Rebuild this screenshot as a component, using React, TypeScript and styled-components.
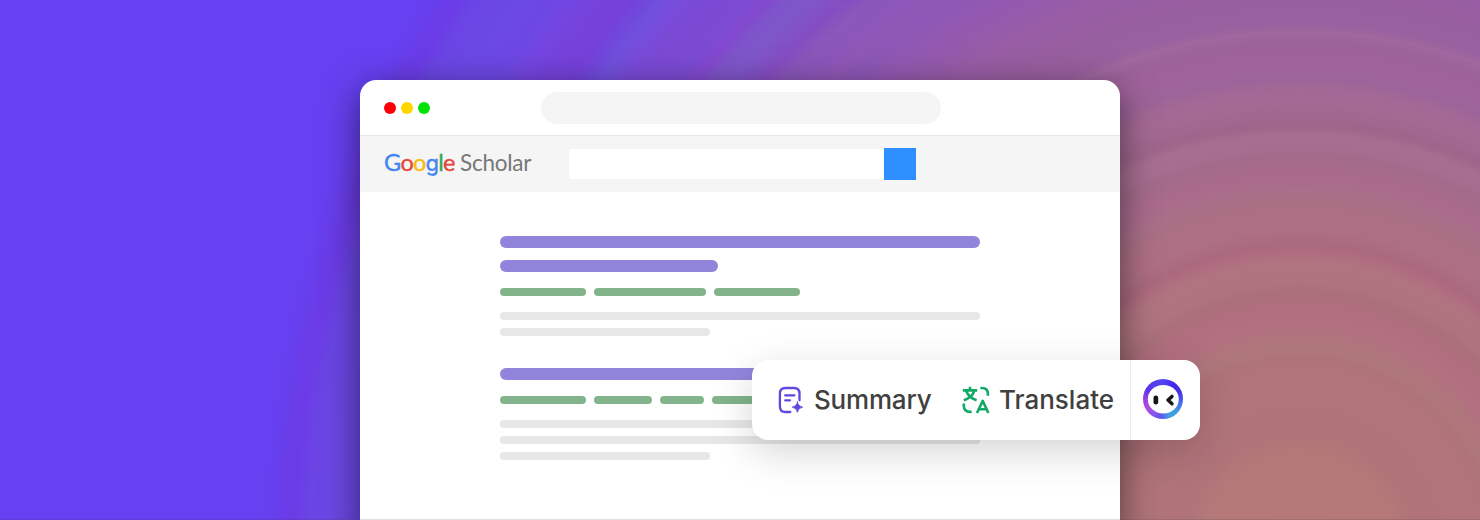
import React from "react";
import styled, { createGlobalStyle } from "styled-components";

const GlobalStyle = createGlobalStyle`
  * { box-sizing: border-box; }
  body { margin: 0; }
`;

const Hero = styled.main`
  position: relative;
  width: 1480px;
  height: 520px;
  overflow: hidden;
  display: flex;
  justify-content: center;
  padding-top: 80px;
  background: radial-gradient(
    circle at 1300px 550px,
    #b47977 0px, #b37877 98px, #af7379 120px, #b0737a 130px, #b0747a 150px,
    #b0747a 182px, #ae7379 193px, #ae777b 202px, #af767c 210px, #b27080 225px,
    #b06e7e 245px, #aa7079 257px, #ae747d 268px, #af757e 285px, #b06f80 295px,
    #aa697e 305px, #ad6f83 320px, #ad6f84 338px, #a87084 350px, #a97089 358px,
    #a96c8b 367px, #a86a8c 380px, #a26b8a 395px, #a76d8f 402px, #a76e90 415px,
    #9f668b 425px, #a06790 435px, #a56a93 447px, #a36895 460px, #9c649a 472px,
    #a0639b 490px, #9c629a 508px, #a0689e 518px, #99619f 526px, #985f9f 550px,
    #985da5 585px, #955aab 605px, #9359b2 628px, #8c57b6 650px, #9058b6 666px,
    #8c56bb 680px, #8a57ba 697px, #864dc2 713px, #8251c6 724px, #7f57c9 738px,
    #7e54ca 753px, #8349cf 765px, #7b4bd3 780px, #7a4ad5 814px, #794bda 825px,
    #7150dc 842px, #7148dc 854px, #7541da 866px, #7542dc 896px, #7446e1 910px,
    #6d47e4 928px, #6b48e4 965px, #6b45e5 990px, #6b3be7 1006px,
    #693de9 1018px, #6640f1 1036px
  );
  &::after {
    content: "";
    position: absolute;
    inset: auto 0 0;
    height: 1px;
    background: rgba(70, 70, 70, 0.16);
  }
`;

const BrowserWindow = styled.section`
  width: 760px;
  height: 460px;
  border-radius: 16px 16px 0 0;
  overflow: hidden;
  background: #fff;
  box-shadow: 0 10px 36px rgba(0, 0, 0, 0.52);
`;

const TitleBar = styled.header`
  display: flex;
  align-items: center;
  height: 56px;
  padding-left: 24px;
  border-bottom: 1px solid #e6e6e6;
`;

const Lights = styled.div`
  display: flex;
  gap: 5px;
  width: 157px;
`;

const Light = styled.span<{ $color: string }>`
  width: 12px;
  height: 12px;
  border-radius: 50%;
  background: ${(p) => p.$color};
`;

const AddressBar = styled.div`
  width: 400px;
  height: 32px;
  border-radius: 16px;
  background: #f5f5f5;
`;

const SearchHeader = styled.div`
  display: flex;
  align-items: center;
  height: 56px;
  padding-left: 24px;
  background: #f5f5f5;
`;

const Brand = styled.div`
  display: flex;
  align-items: baseline;
  width: 185px;
  padding-bottom: 3px;
  font: 400 22.5px/28px Lato, "Liberation Sans", sans-serif;
  white-space: nowrap;
  color: #777;
`;

const Wordmark = styled.span`
  width: 76px;
  font-size: 23.5px;
  letter-spacing: -0.65px;
  -webkit-text-stroke: 0.4px currentColor;
`;

const Letter = styled.span<{ $color: string }>`
  color: ${(p) => p.$color};
`;

const RoundLetter = styled(Letter)`
  font-family: Inter, "Liberation Sans", sans-serif;
  font-size: 21.5px;
  line-height: 1;
  letter-spacing: -0.8px;
`;

const Product = styled.span`
  letter-spacing: -0.25px;
`;

const SearchField = styled.div`
  width: 315px;
  height: 30px;
  background: #fff;
`;

const SearchButton = styled.div`
  width: 32px;
  height: 32px;
  background: #2e90ff;
`;

const Results = styled.div`
  display: flex;
  flex-direction: column;
  gap: 32px;
  width: 480px;
  margin: 44px 0 0 140px;
`;

const Result = styled.article`
  display: flex;
  flex-direction: column;
`;

const TitleLine = styled.div<{ $width: number }>`
  width: ${(p) => p.$width}px;
  height: 12px;
  margin-bottom: 12px;
  border-radius: 6px;
  background: #9085da;
`;

const MetaRow = styled.div`
  display: flex;
  gap: 8px;
  margin: 4px 0 16px;
`;

const MetaChip = styled.span<{ $width: number }>`
  width: ${(p) => p.$width}px;
  height: 8px;
  border-radius: 4px;
  background: #82b38a;
`;

const Snippet = styled.div`
  display: flex;
  flex-direction: column;
  gap: 8px;
`;

const SnippetLine = styled.div<{ $width: number }>`
  width: ${(p) => p.$width}px;
  height: 8px;
  border-radius: 4px;
  background: #e7e7e7;
`;

const Toolbar = styled.aside`
  position: absolute;
  left: 752px;
  top: 360px;
  width: 448px;
  height: 80px;
  display: flex;
  align-items: center;
  padding-left: 24px;
  border-radius: 16px;
  background: #fff;
  box-shadow: 0 12px 40px rgba(0, 0, 0, 0.17);
`;

const Action = styled.div<{ $width: number; $gap: number }>`
  display: flex;
  align-items: center;
  width: ${(p) => p.$width}px;
  gap: ${(p) => p.$gap}px;
  font: 500 26px/32px Inter, "Liberation Sans", sans-serif;
  color: #404040;
  white-space: nowrap;
`;

const ActionLabel = styled.span<{ $tracking: number }>`
  letter-spacing: ${(p) => p.$tracking}px;
`;

const Assistant = styled.div`
  display: flex;
  align-items: center;
  height: 80px;
  padding: 0 0 2px 12px;
  border-left: 1px solid #ececec;
`;

const Ring = styled.div`
  display: grid;
  place-items: center;
  width: 40px;
  height: 40px;
  border-radius: 50%;
  background: conic-gradient(#5145f2, #4426ec 40deg, #4333ea 70deg, #4a66ec 100deg, #3e9fe0 135deg, #3fa0e2 160deg, #5c58ee 185deg, #8f55e8 215deg, #b04adf 240deg, #a03fe0 265deg, #5a35e8 300deg, #5145f2);
`;

const Face = styled.svg`
  width: 40px;
  height: 40px;
`;

const Icon = styled.svg`
  width: 30px;
  height: 30px;
  flex: none;
  fill: none;
  stroke: currentColor;
  stroke-width: 2.3;
  stroke-linecap: round;
  stroke-linejoin: round;
`;

const SummaryIcon = styled(Icon)`
  color: #6246e0;
`;

const TranslateIcon = styled(Icon)`
  color: #12a865;
  stroke-width: 2.6;
  stroke-linecap: butt;
`;

const wordmark: [string, string][] = [
  ["G", "#4384f3"],
  ["o", "#e84437"],
  ["o", "#f7bb0d"],
  ["g", "#4384f3"],
  ["l", "#35a755"],
  ["e", "#e84437"],
];

const results = [
  { titles: [480, 218], meta: [86, 112, 86], snippet: [480, 210] },
  { titles: [480], meta: [86, 58, 44, 100], snippet: [480, 480, 210] },
];

export default function App() {
  return (
    <>
      <GlobalStyle />
      <Hero>
        <BrowserWindow>
          <TitleBar>
            <Lights>
              <Light $color="#fc0008" />
              <Light $color="#ffd500" />
              <Light $color="#05e305" />
            </Lights>
            <AddressBar />
          </TitleBar>
          <SearchHeader>
            <Brand>
              <Wordmark>
                {wordmark.map(([char, color], i) =>
                  char === "g" ? (
                    <RoundLetter key={i} $color={color}>{char}</RoundLetter>
                  ) : (
                    <Letter key={i} $color={color}>{char}</Letter>
                  )
                )}
              </Wordmark>
              <Product>Scholar</Product>
            </Brand>
            <SearchField />
            <SearchButton />
          </SearchHeader>
          <Results>
            {results.map((result, i) => (
              <Result key={i}>
                {result.titles.map((w, j) => <TitleLine key={j} $width={w} />)}
                <MetaRow>
                  {result.meta.map((w, j) => <MetaChip key={j} $width={w} />)}
                </MetaRow>
                <Snippet>
                  {result.snippet.map((w, j) => <SnippetLine key={j} $width={w} />)}
                </Snippet>
              </Result>
            ))}
          </Results>
        </BrowserWindow>
        <Toolbar>
          <Action $width={184} $gap={8}>
            <SummaryIcon viewBox="0 0 30 30">
              <path d="M23.5 15.3V8.6Q23.5 3 17.9 3H9.5Q3.9 3 3.9 8.6V21.4Q3.9 27 9.5 27H14.3" />
              <path d="M9.2 10.3H18.4M9.2 15.3H14" />
              <path d="M21.4 16.8Q22.1 21.3 26.8 22.1Q22.1 22.9 21.4 27.4Q20.7 22.9 16 22.1Q20.7 21.3 21.4 16.8Z" fill="currentColor" strokeWidth="0.7" />
            </SummaryIcon>
            <ActionLabel $tracking={-0.2}>Summary</ActionLabel>
          </Action>
          <Action $width={170} $gap={9}>
            <TranslateIcon viewBox="0 0 30 30">
              <path d="M2.8 5.4H17.2M10 1.8V5M14.3 5.8Q12.2 12.4 3.8 15.2M6.2 6Q8.8 12.8 16.6 15.2" />
              <path d="M20.4 3H22Q27.9 3 27.9 8.8V10.8M3.8 18.6V20.6Q3.8 26.9 10.2 26.9H11.6" />
              <path d="M17 28L22.7 15.9L28.4 28M18.9 24.2H26.5" />
            </TranslateIcon>
            <ActionLabel $tracking={0}>Translate</ActionLabel>
          </Action>
          <Assistant>
            <Ring>
              <Face viewBox="0 0 40 40">
                <ellipse cx="20.3" cy="20.2" rx="15.5" ry="14.3" fill="#fff" />
                <rect x="10.5" y="16.4" width="4.7" height="9.2" rx="2.35" fill="#151515" />
                <path d="M29 17.4L25 21L29 24.8" fill="none" stroke="#151515" strokeWidth="3.4" strokeLinecap="round" strokeLinejoin="round" />
              </Face>
            </Ring>
          </Assistant>
        </Toolbar>
      </Hero>
    </>
  );
}
